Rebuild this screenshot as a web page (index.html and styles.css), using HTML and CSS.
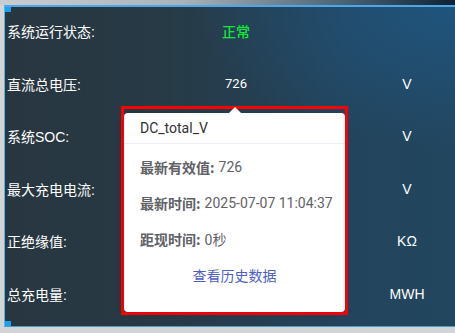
FILE: index.html
```html
<!DOCTYPE html>
<html lang="zh">
<head>
<meta charset="utf-8">
<link rel="stylesheet" href="styles.css">
</head>
<body>
<div class="topbar"></div>
<div class="screen">
  <span class="corner corner-top"></span>
  <span class="corner corner-bottom"></span>
  <div class="list">
    <div class="row"><span class="label">系统运行状态:</span><span class="value ok">正常</span><span class="unit"></span></div>
    <div class="row"><span class="label">直流总电压:</span><span class="value">726</span><span class="unit">V</span></div>
    <div class="row"><span class="label">系统SOC:</span><span class="value"></span><span class="unit">V</span></div>
    <div class="row"><span class="label">最大充电电流:</span><span class="value"></span><span class="unit">V</span></div>
    <div class="row"><span class="label">正绝缘值:</span><span class="value"></span><span class="unit">KΩ</span></div>
    <div class="row"><span class="label">总充电量:</span><span class="value"></span><span class="unit">MWH</span></div>
  </div>
</div>
<div class="tip-frame">
  <span class="arrow"></span>
  <div class="pop">
    <div class="pop-title">DC_total_V</div>
    <div class="pop-body">
      <div class="pop-row"><span class="pop-key">最新有效值:</span><span class="pop-val">726</span></div>
      <div class="pop-row"><span class="pop-key">最新时间:</span><span class="pop-val">2025-07-07 11:04:37</span></div>
      <div class="pop-row"><span class="pop-key">距现时间:</span><span class="pop-val">0秒</span></div>
      <div class="pop-link">查看历史数据</div>
    </div>
  </div>
</div>
</body>
</html>
```
FILE: styles.css
```css
html, body {
  margin: 0;
  padding: 0;
}
body {
  width: 455px;
  height: 333px;
  overflow: hidden;
  background: #d3d4d6;
  position: relative;
  font-family: "Liberation Sans", "Noto Sans CJK SC", sans-serif;
}
.topbar {
  height: 5px;
  background: linear-gradient(to right, #c9cdd1 0%, #a9b3bb 40%, #4a6478 75%, #0d2234 100%);
}
.screen {
  position: relative;
  margin-left: 4px;
  height: 319px;
  border-top: 2px solid #4fa6e6;
  border-left: 1px solid #5cb4e4;
  border-bottom: 1px solid #4c9cc8;
  background:
    radial-gradient(ellipse 260px 140px at 100% 0%, rgba(30, 96, 150, 0.55), rgba(30, 96, 150, 0) 100%),
    linear-gradient(to right, #283640 0%, #273a46 35%, #23445c 75%, #22465f 100%);
  overflow: hidden;
}
.corner {
  position: absolute;
  left: 0;
  width: 6px;
  height: 5px;
  background: #19a2f2;
}
.corner-top { top: 0; }
.corner-bottom { bottom: 0; }
.list {
  padding-left: 2px;
}
.row {
  display: grid;
  grid-template-columns: 154px 150px 192px;
  align-items: center;
  height: 48px;
  padding-bottom: 4.6px;
  color: #ffffff;
  font-size: 14px;
}
.value {
  text-align: center;
  font-family: "Roboto", "Noto Sans CJK SC", sans-serif;
  font-size: 13px;
}
.value.ok {
  color: #14e63a;
  font-family: "Noto Sans CJK SC", sans-serif;
  font-size: 14px;
  font-weight: 500;
}
.unit {
  text-align: center;
  font-size: 14px;
}
.tip-frame {
  position: absolute;
  left: 121px;
  top: 106px;
  width: 221px;
  height: 199px;
  padding-top: 4px;
  border: 3px solid #ff0000;
}
.arrow {
  position: absolute;
  left: 105px;
  top: -2px;
  width: 0;
  height: 0;
  border-left: 6px solid transparent;
  border-right: 6px solid transparent;
  border-bottom: 6px solid #ffffff;
}
.pop {
  height: 199px;
  background: #ffffff;
  border-radius: 4px;
  box-shadow: 0 2px 8px rgba(0, 0, 0, 0.12);
}
.pop-title {
  height: 30px;
  line-height: 30px;
  padding: 0 16px;
  border-bottom: 1px solid #ebeef5;
  color: #303133;
  font-family: "Roboto", "Noto Sans CJK SC", sans-serif;
  font-size: 14px;
}
.pop-body {
  padding: 12px 16px 0;
}
.pop-row {
  display: flex;
  align-items: center;
  gap: 4px;
  height: 22px;
  margin-bottom: 14px;
  color: #606266;
  font-size: 14px;
  white-space: nowrap;
}
.pop-key {
  font-family: "Noto Sans CJK SC", sans-serif;
  font-weight: bold;
}
.pop-val {
  font-family: "Roboto", "Noto Sans CJK SC", sans-serif;
  font-size: 14px;
}
.pop-link {
  height: 22px;
  line-height: 22px;
  text-align: center;
  color: #4d60c2;
  font-family: "Noto Sans CJK SC", sans-serif;
  font-size: 14px;
}
```
